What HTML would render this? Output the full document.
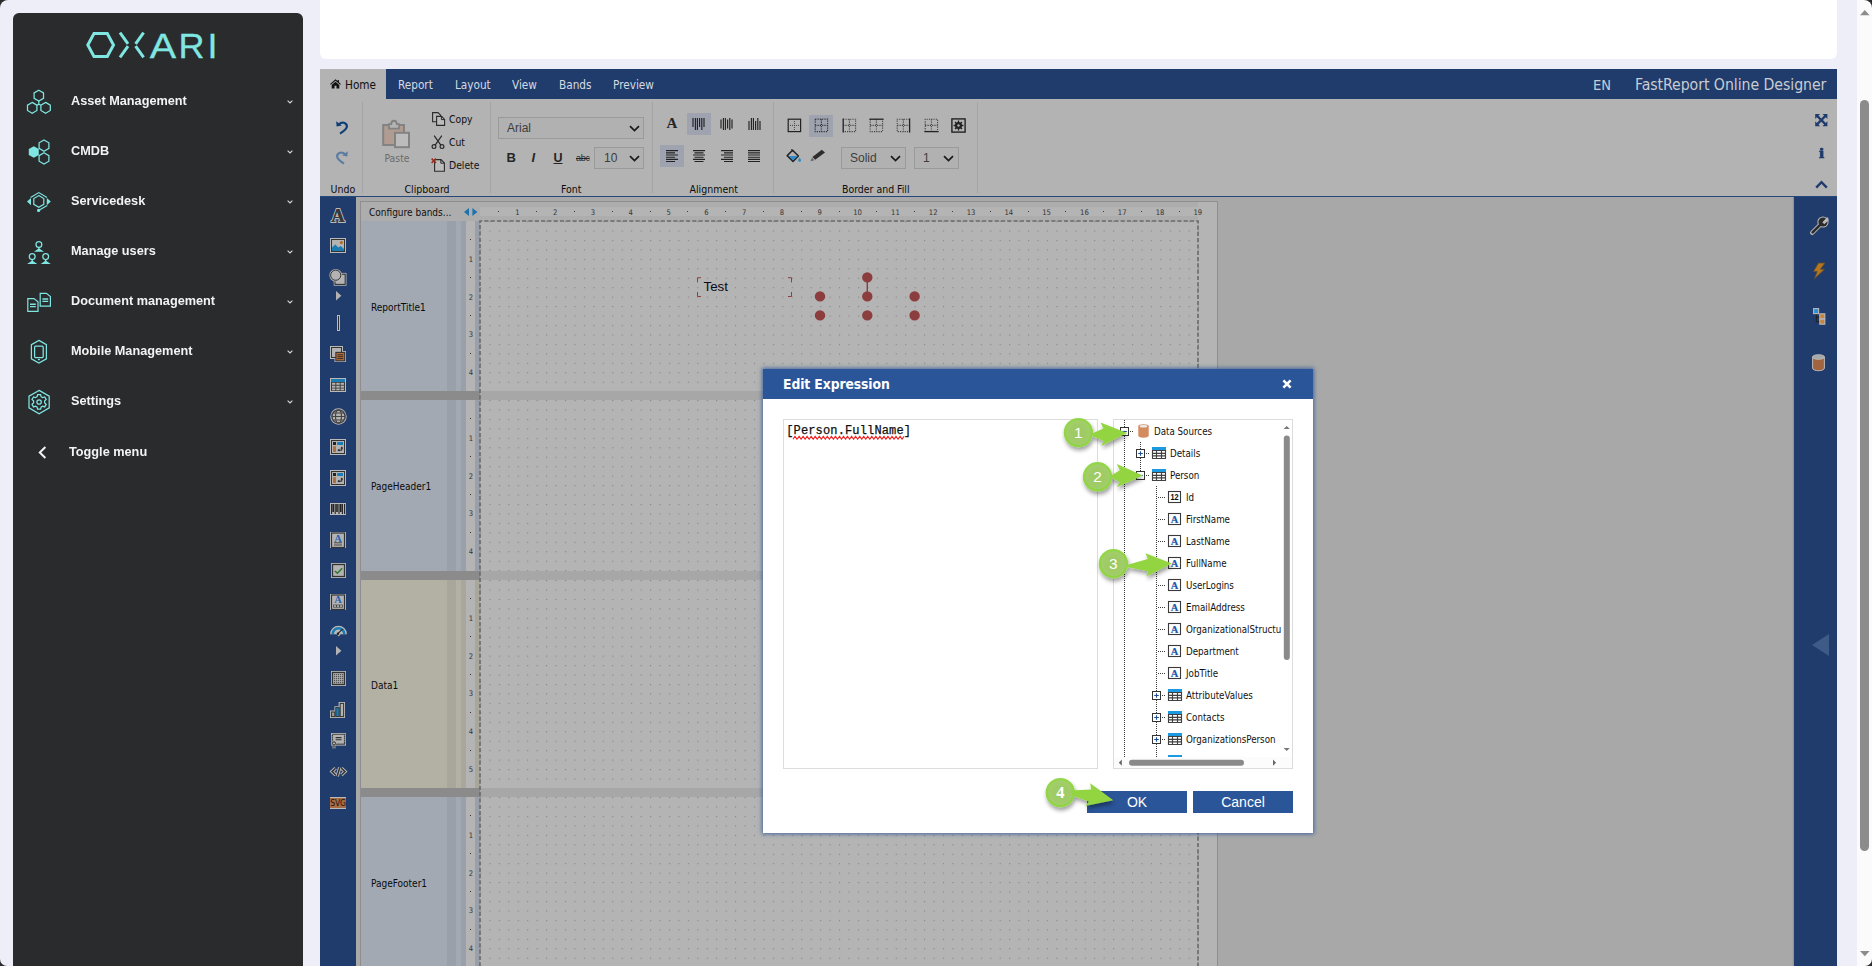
<!DOCTYPE html>
<html lang="en">
<head>
<meta charset="utf-8">
<title>Oxari - FastReport Online Designer</title>
<style>
*{box-sizing:border-box}
html,body{margin:0;padding:0}
body{width:1872px;height:966px;overflow:hidden;background:#eeeef8;position:relative;font-family:"Liberation Sans",sans-serif}
.abs{position:absolute}
.tah{font-family:"DejaVu Sans Condensed","DejaVu Sans","Liberation Sans",sans-serif}
.arial{font-family:"Liberation Sans",sans-serif}
svg{display:block;overflow:visible}
/* sidebar */
#side{left:13px;top:13px;width:290px;height:960px;background:#2a2b2d;border-radius:6px 6px 0 0}
.mi{position:absolute;left:58px;height:20px;line-height:20px;font:bold 13.6px "Liberation Sans",sans-serif;color:#f3f3f3;white-space:nowrap;transform-origin:0 50%;transform:scaleX(.935)}
.chev{position:absolute;left:273.5px;width:6px;height:4px}
.ico{position:absolute}
/* designer */
#tabbar{left:320px;top:69px;width:1517px;height:30px;background:#1f3c6c}
.tab{position:absolute;top:1px;height:30px;line-height:30px;font-size:11.7px;color:#d6dae2;white-space:nowrap}
#ribbon{left:320px;top:99px;width:1517px;height:97px;background:#b3b3b3}
.gl{position:absolute;top:83px;font-size:10.5px;color:#0c0c0c;white-space:nowrap;line-height:14px}
.sep{position:absolute;top:3px;width:1px;height:91px;background:#a4a4a4}
.rt{position:absolute;font-size:10.3px;color:#111;white-space:nowrap;line-height:14px}
.sel{position:absolute;border:1px solid #9a9a9a;background:#b1b1b1;color:#3d3d3d;font:12px "Liberation Sans",sans-serif;white-space:nowrap}
.hl{position:absolute;background:#9ea3af}
.bandl{position:absolute;left:371px;font-size:10px;color:#0a0a0a;line-height:12px;white-space:nowrap}
.rn{position:absolute;font-size:7.6px;color:#333;line-height:10px;text-align:center;width:14px;white-space:nowrap}
.tl{position:absolute;font-size:9.7px;color:#111;line-height:12px;white-space:nowrap}
.badge{position:absolute;width:28px;height:28px;border-radius:50%;background:radial-gradient(circle at 50% 40%,#9fd356 0%,#8cc63f 70%,#86bf3c 100%);border:1px solid #a6d66a;box-shadow:0 1px 4px rgba(70,110,20,.55);color:#fff;font:15px "DejaVu Sans Condensed","Liberation Sans",sans-serif;line-height:26px;text-align:center}
</style>
</head>
<body>
<!-- window corners -->
<div class="abs" style="left:0;top:0;width:8px;height:8px;background:#2b2b2c"><div style="width:100%;height:100%;background:#eeeef8;border-top-left-radius:9px"></div></div>
<div class="abs" style="left:0;top:959px;width:7px;height:7px;background:#2b2b2c"><div style="width:100%;height:100%;background:#eeeef8;border-bottom-left-radius:8px"></div></div>
<!-- ========== SIDEBAR ========== -->
<div id="side" class="abs">
 <svg class="abs" style="left:73px;top:19px" width="130" height="26" viewBox="86 32 130 26" role="img" aria-label="OXARI">
  <g fill="none" stroke="#7fe6e1" stroke-width="3" stroke-linejoin="miter">
   <polygon points="87.8,45 94,33.6 107.3,33.6 113.5,45 107.3,56.4 94,56.4"/>
   <polyline points="120,32.6 128,43.8"/><polyline points="120,57.4 128,46.2"/>
   <polyline points="143.6,32.6 135.6,43.8"/><polyline points="143.6,57.4 135.6,46.2"/>
  </g>
  <text fill="#7fe6e1" stroke="#7fe6e1" stroke-width=".3" font-family="Liberation Sans, sans-serif" font-size="35.4" y="58"><tspan x="149.8" textLength="26.4" lengthAdjust="spacingAndGlyphs">A</tspan><tspan x="178.6" textLength="26" lengthAdjust="spacingAndGlyphs">R</tspan><tspan x="207.4" textLength="10" lengthAdjust="spacingAndGlyphs">I</tspan></text>
 </svg>

 <!-- Asset Management icon -->
 <svg class="ico" style="left:13px;top:76px" width="26" height="26" viewBox="26 89 26 26">
  <g fill="none" stroke="#7fe6e1" stroke-width="1.25">
   <polygon points="38.8,90.2 43.5,92.9 43.5,98.3 38.8,101 34.1,98.3 34.1,92.9"/>
   <polygon points="32.2,102.4 36.9,105.1 36.9,110.5 32.2,113.2 27.5,110.5 27.5,105.1"/>
   <polygon points="45.6,102.4 50.3,105.1 50.3,110.5 45.6,113.2 40.9,110.5 40.9,105.1"/>
   <path d="M38.8,101v3.2M38.8,104.2l-1.9,1M38.8,104.2l2,1"/>
  </g>
 </svg>
 <div class="mi" style="top:80px">Asset Management</div>
 <svg class="chev" style="top:87px" viewBox="0 0 6 4"><path d="M.6,.6 3,3 5.4,.6" fill="none" stroke="#d8d8d8" stroke-width="1.1"/></svg>

 <!-- CMDB icon -->
 <svg class="ico" style="left:13px;top:126px" width="26" height="26" viewBox="26 139 26 26">
  <polygon fill="#7fe6e1" points="33.8,146.2 38.8,149.1 38.8,154.9 33.8,157.8 28.8,154.9 28.8,149.1"/>
  <g fill="none" stroke="#7fe6e1" stroke-width="1.25">
   <polygon points="44,140 48.9,142.8 48.9,148.4 44,151.2 39.1,148.4 39.1,142.8"/>
   <polygon points="44,152.8 48.9,155.6 48.9,161.2 44,164 39.1,161.2 39.1,155.6"/>
  </g>
 </svg>
 <div class="mi" style="top:130px">CMDB</div>
 <svg class="chev" style="top:137px" viewBox="0 0 6 4"><path d="M.6,.6 3,3 5.4,.6" fill="none" stroke="#d8d8d8" stroke-width="1.1"/></svg>

 <!-- Servicedesk icon -->
 <svg class="ico" style="left:13px;top:176px" width="26" height="26" viewBox="26 189 26 26">
  <g fill="none" stroke="#7fe6e1" stroke-width="1.2">
   <polygon points="38.8,195.6 43.8,198.5 43.8,204.3 38.8,207.2 33.8,204.3 33.8,198.5"/>
   <path d="M30.6,197.6 38.8,192.6 47,197.6"/>
   <path d="M47.2,205.6 39,210.2"/>
  </g>
  <path fill="#7fe6e1" d="M31,198 31,205.2 27,201.6zM46.8,198 46.8,205.2 50.8,201.6z"/>
  <circle cx="38.6" cy="210.4" r="1.6" fill="#7fe6e1"/>
 </svg>
 <div class="mi" style="top:180px">Servicedesk</div>
 <svg class="chev" style="top:187px" viewBox="0 0 6 4"><path d="M.6,.6 3,3 5.4,.6" fill="none" stroke="#d8d8d8" stroke-width="1.1"/></svg>

 <!-- Manage users icon -->
 <svg class="ico" style="left:13px;top:226px" width="26" height="26" viewBox="26 239 26 26">
  <g fill="none" stroke="#7fe6e1" stroke-width="1.25">
   <circle cx="38.9" cy="244.4" r="2.9"/><circle cx="32.2" cy="256.6" r="2.9"/><circle cx="45.7" cy="256.6" r="2.9"/>
  </g>
  <path fill="#7fe6e1" d="M38.2,247.2h1.4v1.6l4.4,2.9h-10l4.2,-2.9zM31.5,259.4h1.4v1.6l4.4,2.9h-10.2l4.4,-2.9zM45,259.4h1.4v1.6l4.4,2.9h-10.2l4.4,-2.9z"/>
 </svg>
 <div class="mi" style="top:230px">Manage users</div>
 <svg class="chev" style="top:237px" viewBox="0 0 6 4"><path d="M.6,.6 3,3 5.4,.6" fill="none" stroke="#d8d8d8" stroke-width="1.1"/></svg>

 <!-- Document management icon -->
 <svg class="ico" style="left:13px;top:276px" width="26" height="26" viewBox="26 289 26 26">
  <g fill="none" stroke="#7fe6e1" stroke-width="1.2">
   <path d="M27.8,298.6h6.2l4,3.2v9.6h-10.2z"/>
   <path d="M40.2,293.4h6.2l4,3.2v9.6h-10.2z"/>
   <path d="M30,304.2h5.8M30,306.6h5.8M42.4,299h5.8M42.4,301.4h5.8" stroke-width="1.4"/>
  </g>
 </svg>
 <div class="mi" style="top:280px">Document management</div>
 <svg class="chev" style="top:287px" viewBox="0 0 6 4"><path d="M.6,.6 3,3 5.4,.6" fill="none" stroke="#d8d8d8" stroke-width="1.1"/></svg>

 <!-- Mobile Management icon -->
 <svg class="ico" style="left:13px;top:326px" width="26" height="26" viewBox="26 339 26 26">
  <g fill="none" stroke="#7fe6e1" stroke-width="1.25">
   <polygon points="38.9,340.4 46.4,344.6 46.4,358.8 38.9,363 31.4,358.8 31.4,344.6"/>
   <rect x="34.6" y="346.2" width="8.6" height="11.4" rx="1"/>
   <path d="M37.9,359.6h2"/>
  </g>
 </svg>
 <div class="mi" style="top:330px">Mobile Management</div>
 <svg class="chev" style="top:337px" viewBox="0 0 6 4"><path d="M.6,.6 3,3 5.4,.6" fill="none" stroke="#d8d8d8" stroke-width="1.1"/></svg>

 <!-- Settings icon -->
 <svg class="ico" style="left:13px;top:376px" width="26" height="26" viewBox="26 389 26 26">
  <g fill="none" stroke="#7fe6e1" stroke-width="1.25">
   <polygon points="39.1,390.4 49.2,396.2 49.2,407.9 39.1,413.7 29,407.9 29,396.2"/>
   <circle cx="39.1" cy="402" r="2.2"/>
   <path d="M37.6,394.6h3l.5,2.1 1.5,.9 2.1,-.7 1.5,2.6 -1.6,1.5v1.8l1.6,1.5 -1.5,2.6 -2.1,-.7 -1.5,.9 -.5,2.1h-3l-.5,-2.1 -1.5,-.9 -2.1,.7 -1.5,-2.6 1.6,-1.5v-1.8l-1.6,-1.5 1.5,-2.6 2.1,.7 1.5,-.9z"/>
  </g>
 </svg>
 <div class="mi" style="top:380px">Settings</div>
 <svg class="chev" style="top:387px" viewBox="0 0 6 4"><path d="M.6,.6 3,3 5.4,.6" fill="none" stroke="#d8d8d8" stroke-width="1.1"/></svg>

 <!-- Toggle -->
 <svg class="ico" style="left:25px;top:433px" width="9" height="13" viewBox="0 0 9 13"><path d="M7.4,1 1.8,6.5 7.4,12" fill="none" stroke="#f3f3f3" stroke-width="2"/></svg>
 <div class="mi" style="left:56px;top:431px">Toggle menu</div>
</div>

<!-- top white panel -->
<div class="abs" style="left:320px;top:-10px;width:1517px;height:69px;background:#fff;border-radius:0 0 6px 6px"></div>
<!-- ========== DESIGNER: TAB BAR ========== -->
<div id="tabbar" class="abs tah">
 <div class="abs" style="left:0;top:0;width:66px;height:30px;background:#b3b3b3"></div>
 <svg class="abs" style="left:10px;top:10px" width="11" height="10" viewBox="0 0 11 10"><path fill="#111" d="M5.5,.3 .1,4.9 .8,5.7 5.5,1.8 10.2,5.7 10.9,4.9 8.9,3.2V.9H7.6v1.2zM5.5,2.7 1.7,5.9V9.6H4.5V6.8h2V9.6H9.3V5.9z"/></svg>
 <div class="tab" style="left:25px;color:#101010">Home</div>
 <div class="tab" style="left:78px">Report</div>
 <div class="tab" style="left:135px">Layout</div>
 <div class="tab" style="left:192px">View</div>
 <div class="tab" style="left:239px">Bands</div>
 <div class="tab" style="left:293px">Preview</div>
 <div class="tab" style="left:1273px;font-size:14.5px;color:#c9ccd3">EN</div>
 <div class="tab" style="left:1315px;font-size:15.7px;color:#c9ccd3;letter-spacing:-.05px">FastReport Online Designer</div>
</div>

<!-- ========== DESIGNER: RIBBON ========== -->
<div id="ribbon" class="abs tah">
 <!-- Undo group -->
 <svg class="abs" style="left:15px;top:21px" width="14" height="15" viewBox="0 0 14 15"><path d="M1.2,1.2 1.6,6.6 6.9,5.4z" fill="#103f78"/><path d="M4,4.2C7,1.2 11.6,2.6 11.9,6.2 12.1,9.2 8.6,11.4 5,13.6" fill="none" stroke="#103f78" stroke-width="2.2"/></svg>
 <svg class="abs" style="left:15px;top:51px" width="14" height="15" viewBox="0 0 14 15"><g transform="translate(14,0) scale(-1,1)"><path d="M1.2,1.2 1.6,6.6 6.9,5.4z" fill="#5c7ca2"/><path d="M4,4.2C7,1.2 11.6,2.6 11.9,6.2 12.1,9.2 8.6,11.4 5,13.6" fill="none" stroke="#5c7ca2" stroke-width="2.2"/></g></svg>
 <div class="gl" style="left:10.5px">Undo</div>
 <div class="sep" style="left:42px"></div>

 <!-- Clipboard group -->
 <svg class="abs" style="left:61px;top:20px" width="30" height="30" viewBox="381 119 30 30">
  <rect x="383.2" y="125" width="20.8" height="20" fill="#b09c90" stroke="#838383" stroke-width="2"/>
  <path d="M389,128.6v-4.4h2.2c0,-4.6 5.6,-4.6 5.6,0h2.2v4.4z" fill="#b3b3b3" stroke="#838383" stroke-width="1.8"/>
  <rect x="395" y="132.8" width="14" height="14.4" fill="#bcbcbc" stroke="#838383" stroke-width="2"/>
 </svg>
 <div class="rt" style="left:64.5px;top:52px;color:#6b6b6b">Paste</div>

 <svg class="abs" style="left:111px;top:12px" width="15" height="15" viewBox="431 111 15 15">
  <path d="M432.6,112.6h5.4l2.6,2.6v6.6h-8z" fill="#b6b6b6" stroke="#2a2a2a" stroke-width="1.1"/>
  <path d="M436.6,116.4h5l3,3v6h-8z" fill="#bcbcbc" stroke="#2a2a2a" stroke-width="1.1"/>
  <path d="M441.4,116.6v3h3" fill="none" stroke="#2a2a2a" stroke-width="1"/>
 </svg>
 <div class="rt" style="left:129px;top:12.5px">Copy</div>

 <svg class="abs" style="left:111px;top:35px" width="14" height="15" viewBox="431 134 14 15">
  <g fill="none" stroke="#2a2a2a" stroke-width="1.2"><path d="M434.2,135.6 441,145.4M441.8,135.6 435,145.4"/><circle cx="434" cy="146.6" r="1.9"/><circle cx="442" cy="146.6" r="1.9"/></g>
 </svg>
 <div class="rt" style="left:129px;top:35.5px">Cut</div>

 <svg class="abs" style="left:111px;top:58px" width="15" height="15" viewBox="431 157 15 15">
  <path d="M434.6,159.6h6.4l3.4,3.4v8.2h-9.8z" fill="#bcbcbc" stroke="#2a2a2a" stroke-width="1.1"/>
  <path d="M440.8,159.8v3.4h3.4" fill="none" stroke="#2a2a2a" stroke-width="1"/>
  <path d="M431.6,158.6l4.4,4.4M436,158.6l-4.4,4.4" stroke="#9a2b1c" stroke-width="1.5"/>
 </svg>
 <div class="rt" style="left:129px;top:58.5px">Delete</div>
 <div class="gl" style="left:84.5px">Clipboard</div>
 <div class="sep" style="left:170px"></div>

 <!-- Font group -->
 <div class="sel" style="left:178px;top:18px;width:146px;height:22px;line-height:20px;padding-left:8px">Arial</div>
 <svg class="abs" style="left:309px;top:26px" width="11" height="7" viewBox="0 0 11 7"><path d="M1,1.2 5.5,5.6 10,1.2" fill="none" stroke="#1a1a1a" stroke-width="1.7"/></svg>
 <div class="abs arial" style="left:186.5px;top:51px;font:bold 13px 'Liberation Sans',sans-serif;color:#262626;line-height:16px">B</div>
 <div class="abs arial" style="left:211.5px;top:51px;font:italic bold 13px 'Liberation Sans',sans-serif;color:#262626;line-height:16px">I</div>
 <div class="abs arial" style="left:233.5px;top:50.5px;font:bold 12.5px 'Liberation Sans',sans-serif;color:#262626;line-height:16px;text-decoration:underline">U</div>
 <div class="abs arial" style="left:256px;top:51.5px;font:9px 'Liberation Sans',sans-serif;color:#262626;line-height:14px;text-decoration:line-through;letter-spacing:-.3px">abc</div>
 <div class="sel" style="left:274px;top:48px;width:50px;height:22px;line-height:20px;padding-left:9px">10</div>
 <svg class="abs" style="left:309px;top:56px" width="11" height="7" viewBox="0 0 11 7"><path d="M1,1.2 5.5,5.6 10,1.2" fill="none" stroke="#1a1a1a" stroke-width="1.7"/></svg>
 <div class="gl" style="left:241px">Font</div>
 <div class="sep" style="left:332px"></div>

 <!-- Alignment group -->
 <div class="abs" style="left:346.5px;top:15.5px;font:bold 15px 'Liberation Serif',serif;color:#262626;line-height:16px">A</div>
 <div class="hl" style="left:367px;top:14px;width:24px;height:22px"></div>
 <svg class="abs" style="left:372px;top:19px" width="13" height="12" viewBox="0 0 13 12"><path d="M1,0v9M3.4,0v12M5.4,0v12M7.6,0v9M9.8,0v12M12,0v9" stroke="#222" stroke-width="1.15" fill="none"/></svg>
 <svg class="abs" style="left:400px;top:19px" width="13" height="12" viewBox="0 0 13 12"><path d="M1,1.5v9M3.4,0v12M5.4,0v12M7.6,1.5v9M9.8,0v12M12,1.5v9" stroke="#222" stroke-width="1.15" fill="none"/></svg>
 <svg class="abs" style="left:428px;top:19px" width="13" height="12" viewBox="0 0 13 12"><path d="M1,3v9M3.4,0v12M5.4,0v12M7.6,3v9M9.8,0v12M12,3v9" stroke="#222" stroke-width="1.15" fill="none"/></svg>
 <div class="hl" style="left:340px;top:46px;width:24px;height:22px"></div>
 <svg class="abs" style="left:346px;top:51px" width="13" height="12" viewBox="0 0 13 12"><path d="M0,.6h12M0,2.8h9M0,5h12M0,7.2h9M0,9.4h12M0,11.5h9" stroke="#222" stroke-width="1.15" fill="none"/></svg>
 <svg class="abs" style="left:372.5px;top:51px" width="13" height="12" viewBox="0 0 13 12"><path d="M0,.6h12M1.5,2.8h9M0,5h12M1.5,7.2h9M0,9.4h12M1.5,11.5h9" stroke="#222" stroke-width="1.15" fill="none"/></svg>
 <svg class="abs" style="left:401px;top:51px" width="13" height="12" viewBox="0 0 13 12"><path d="M0,.6h12M3,2.8h9M0,5h12M3,7.2h9M0,9.4h12M3,11.5h9" stroke="#222" stroke-width="1.15" fill="none"/></svg>
 <svg class="abs" style="left:428px;top:51px" width="13" height="12" viewBox="0 0 13 12"><path d="M0,.6h12M0,2.8h12M0,5h12M0,7.2h12M0,9.4h12M0,11.5h12" stroke="#222" stroke-width="1.15" fill="none"/></svg>
 <div class="gl" style="left:369.5px">Alignment</div>
 <div class="sep" style="left:453px"></div>

 <!-- Border and Fill group -->
 <svg class="abs" style="left:467px;top:19px" width="15" height="15" viewBox="0 0 15 15"><rect x="1.2" y="1.2" width="12.4" height="12.4" fill="none" stroke="#222" stroke-width="1.2"/><path d="M7.4,3v9M3,7.4h9" stroke="#444" stroke-width="1" stroke-dasharray="1 1" fill="none"/></svg>
 <div class="hl" style="left:489px;top:16px;width:24px;height:22px"></div>
 <svg class="abs" style="left:494px;top:19px" width="15" height="15" viewBox="0 0 15 15"><path d="M1.2,1.2h12.4v12.4h-12.4zM7.4,1.2v12.4M1.2,7.4h12.4" fill="none" stroke="#333" stroke-width="1.2" stroke-dasharray="1.2 1.1"/></svg>
 <svg class="abs" style="left:522px;top:19px" width="15" height="15" viewBox="0 0 15 15"><path d="M1.2,1.2h12.4v12.4h-12.4M7.4,1.2v12.4M1.2,7.4h12.4" fill="none" stroke="#444" stroke-width="1.1" stroke-dasharray="1.2 1.1"/><path d="M1.2,.4v14.2" stroke="#222" stroke-width="1.3"/></svg>
 <svg class="abs" style="left:549px;top:19px" width="15" height="15" viewBox="0 0 15 15"><path d="M1.2,1.2v12.4h12.4v-12.4M7.4,1.2v12.4M1.2,7.4h12.4" fill="none" stroke="#444" stroke-width="1.1" stroke-dasharray="1.2 1.1"/><path d="M.4,1.2h14.2" stroke="#222" stroke-width="1.3"/></svg>
 <svg class="abs" style="left:576px;top:19px" width="15" height="15" viewBox="0 0 15 15"><path d="M13.6,1.2h-12.4v12.4h12.4M7.4,1.2v12.4M1.2,7.4h12.4" fill="none" stroke="#444" stroke-width="1.1" stroke-dasharray="1.2 1.1"/><path d="M13.6,.4v14.2" stroke="#222" stroke-width="1.3"/></svg>
 <svg class="abs" style="left:604px;top:19px" width="15" height="15" viewBox="0 0 15 15"><path d="M1.2,13.6v-12.4h12.4v12.4M7.4,1.2v12.4M1.2,7.4h12.4" fill="none" stroke="#444" stroke-width="1.1" stroke-dasharray="1.2 1.1"/><path d="M.4,13.6h14.2" stroke="#222" stroke-width="1.3"/></svg>
 <svg class="abs" style="left:630.5px;top:18.5px" width="15" height="15" viewBox="0 0 15 15"><rect x=".9" y=".9" width="13.2" height="13.2" fill="none" stroke="#222" stroke-width="1.4"/><circle cx="7.5" cy="7.5" r="2.7" fill="none" stroke="#222" stroke-width="1.7"/><path d="M7.5,2.6v9.8M2.6,7.5h9.8M4,4l7,7M11,4l-7,7" stroke="#222" stroke-width="1.3"/><circle cx="7.5" cy="7.5" r="1.2" fill="#b3b3b3"/></svg>

 <svg class="abs" style="left:466px;top:50px" width="16" height="14" viewBox="0 0 16 14"><path d="M6.6,1.2 12.4,7 7,12.4 1.2,6.6z" fill="#b3b3b3" stroke="#222" stroke-width="1.5" stroke-linejoin="round"/><path d="M2.4,7h9.4L7,11.6z" fill="#2e8bc8"/><path d="M5.4,.4 7.4,2.4" stroke="#222" stroke-width="1.3"/><path d="M13.6,8.6c1,1.4 1.4,2.2 1.4,2.8a1.4,1.4 0 0 1 -2.8,0c0,-.6 .4,-1.4 1.4,-2.8z" fill="#2e8bc8"/></svg>
 <svg class="abs" style="left:490px;top:50px" width="16" height="13" viewBox="0 0 16 13"><path d="M11.8,.8 15,3.4 5.2,10.8 2.4,8z" fill="#2d2d2d"/><path d="M1.9,8.7 4.4,11.3 .6,12.3z" fill="#666"/></svg>
 <div class="sel" style="left:521px;top:48px;width:65px;height:22px;line-height:20px;padding-left:8px">Solid</div>
 <svg class="abs" style="left:570px;top:56px" width="11" height="7" viewBox="0 0 11 7"><path d="M1,1.2 5.5,5.6 10,1.2" fill="none" stroke="#1a1a1a" stroke-width="1.7"/></svg>
 <div class="sel" style="left:594px;top:48px;width:45px;height:22px;line-height:20px;padding-left:8px">1</div>
 <svg class="abs" style="left:623px;top:56px" width="11" height="7" viewBox="0 0 11 7"><path d="M1,1.2 5.5,5.6 10,1.2" fill="none" stroke="#1a1a1a" stroke-width="1.7"/></svg>
 <div class="gl" style="left:522px;font-size:10.45px">Border and Fill</div>
 <div class="sep" style="left:657px"></div>

 <!-- right-side icons -->
 <svg class="abs" style="left:1495.4px;top:14.8px" width="12.6" height="12.2" viewBox="0 0 13 13"><g fill="#1f3c6c"><path d="M0,0h5.2L3.5,1.7 6.5,4.7 9.5,1.7 7.8,0H13V5.2L11.3,3.5 8.3,6.5 11.3,9.5 13,7.8V13H7.8L9.5,11.3 6.5,8.3 3.5,11.3 5.2,13H0V7.8L1.7,9.5 4.7,6.5 1.7,3.5 0,5.2z"/></g></svg>
 <div class="abs" style="left:1499.2px;top:45px;font:bold 15px 'Liberation Serif',serif;color:#1f3c6c;line-height:18px;-webkit-text-stroke:.7px #1f3c6c;transform:scaleX(1.25);transform-origin:0 50%">i</div>
 <svg class="abs" style="left:1495px;top:81px" width="13" height="9" viewBox="0 0 13 9"><path d="M1.2,7.6 6.5,2.2 11.8,7.6" fill="none" stroke="#1f3c6c" stroke-width="2.4"/></svg>
</div>
<div class="abs" style="left:320px;top:196px;width:1517px;height:1px;background:#25477c"></div>
<!-- ========== DESIGNER: WORK AREA ========== -->
<div class="abs" style="left:320px;top:197px;width:1517px;height:780px;background:#a8a8a8"></div>
<div id="ltool" class="abs" style="left:320px;top:197px;width:36px;height:780px;background:#1f3c6c"></div>
<div class="abs" style="left:356px;top:197px;width:4px;height:780px;background:#a9a9a9"></div>
<div id="canvas" class="abs tah" style="left:360px;top:201px;width:858px;height:780px;background:#b4b4b4;border:1px solid #8e8e8e"></div>
<div class="abs" style="left:361px;top:202px;width:837px;height:19px;background:#adadad"></div>
<div class="abs" style="left:480px;top:207px;width:719px;height:9px;background:#b4b4b4"></div>
<div class="abs tah" style="left:369px;top:205.5px;font-size:10px;line-height:13px;color:#111;white-space:nowrap">Configure bands...</div>
<svg class="abs" style="left:464px;top:208px" width="14" height="8" viewBox="0 0 14 8"><path d="M5,0V8L0,4zM8.4,0V8L13.4,4z" fill="#1d72ae"/></svg>
<div class="tah">
<div class="rn" style="left:510.4px;top:208px">1</div><div class="rn" style="left:548.2px;top:208px">2</div><div class="rn" style="left:586.0px;top:208px">3</div><div class="rn" style="left:623.8px;top:208px">4</div><div class="rn" style="left:661.6px;top:208px">5</div><div class="rn" style="left:699.4px;top:208px">6</div><div class="rn" style="left:737.2px;top:208px">7</div><div class="rn" style="left:775.0px;top:208px">8</div><div class="rn" style="left:812.8px;top:208px">9</div><div class="rn" style="left:850.6px;top:208px">10</div><div class="rn" style="left:888.4px;top:208px">11</div><div class="rn" style="left:926.2px;top:208px">12</div><div class="rn" style="left:964.0px;top:208px">13</div><div class="rn" style="left:1001.8px;top:208px">14</div><div class="rn" style="left:1039.6px;top:208px">15</div><div class="rn" style="left:1077.4px;top:208px">16</div><div class="rn" style="left:1115.2px;top:208px">17</div><div class="rn" style="left:1153.0px;top:208px">18</div><div class="rn" style="left:1190.8px;top:208px">19</div><div class="abs" style="left:498.4px;top:211px;width:1px;height:1px;background:#4a3a3a"></div><div class="abs" style="left:536.2px;top:211px;width:1px;height:1px;background:#4a3a3a"></div><div class="abs" style="left:574.0px;top:211px;width:1px;height:1px;background:#4a3a3a"></div><div class="abs" style="left:611.8px;top:211px;width:1px;height:1px;background:#4a3a3a"></div><div class="abs" style="left:649.6px;top:211px;width:1px;height:1px;background:#4a3a3a"></div><div class="abs" style="left:687.4px;top:211px;width:1px;height:1px;background:#4a3a3a"></div><div class="abs" style="left:725.2px;top:211px;width:1px;height:1px;background:#4a3a3a"></div><div class="abs" style="left:763.0px;top:211px;width:1px;height:1px;background:#4a3a3a"></div><div class="abs" style="left:800.8px;top:211px;width:1px;height:1px;background:#4a3a3a"></div><div class="abs" style="left:838.6px;top:211px;width:1px;height:1px;background:#4a3a3a"></div><div class="abs" style="left:876.4px;top:211px;width:1px;height:1px;background:#4a3a3a"></div><div class="abs" style="left:914.2px;top:211px;width:1px;height:1px;background:#4a3a3a"></div><div class="abs" style="left:952.0px;top:211px;width:1px;height:1px;background:#4a3a3a"></div><div class="abs" style="left:989.8px;top:211px;width:1px;height:1px;background:#4a3a3a"></div><div class="abs" style="left:1027.6px;top:211px;width:1px;height:1px;background:#4a3a3a"></div><div class="abs" style="left:1065.4px;top:211px;width:1px;height:1px;background:#4a3a3a"></div><div class="abs" style="left:1103.2px;top:211px;width:1px;height:1px;background:#4a3a3a"></div><div class="abs" style="left:1141.0px;top:211px;width:1px;height:1px;background:#4a3a3a"></div><div class="abs" style="left:1178.8px;top:211px;width:1px;height:1px;background:#4a3a3a"></div>
</div>
<div class="abs" style="left:480px;top:221px;width:719px;height:760px;background:#b4b4b4"></div>
<div class="abs" style="left:1199px;top:221px;width:18px;height:780px;background:#b4b4b4"></div>
<svg class="abs" style="left:480px;top:221px" width="719" height="760"><defs><pattern id="dots" x="-0.1" y="0" width="9.45" height="9.45" patternUnits="userSpaceOnUse"><rect x="0" y="0" width="1.15" height="1.15" fill="#858585"/></pattern></defs><svg x="0" y="0" width="719" height="170"><rect x="0" y="0" width="719" height="170" fill="url(#dots)"/></svg><svg x="0" y="179" width="719" height="171"><rect x="0" y="0" width="719" height="171" fill="url(#dots)"/></svg><svg x="0" y="359" width="719" height="208"><rect x="0" y="0" width="719" height="208" fill="url(#dots)"/></svg><svg x="0" y="576" width="719" height="183"><rect x="0" y="0" width="719" height="183" fill="url(#dots)"/></svg></svg>
<div class="abs" style="left:361px;top:221px;width:119px;height:170px;background:#a3a9b3"></div><div class="abs" style="left:447px;top:221px;width:9px;height:170px;background:#9aa0a9"></div><div class="abs" style="left:461px;top:221px;width:5px;height:170px;background:#9aa0a9"></div><div class="abs" style="left:466px;top:221px;width:9px;height:170px;background:#b4b4b4"></div><div class="abs" style="left:475px;top:221px;width:5px;height:170px;background:#9aa0a9"></div><div class="bandl tah" style="top:301.5px">ReportTitle1</div>
<div class="tah"><div class="rn" style="left:464px;top:254.8px">1</div><div class="rn" style="left:464px;top:292.6px">2</div><div class="rn" style="left:464px;top:330.4px">3</div><div class="rn" style="left:464px;top:368.2px">4</div><div class="abs" style="left:470px;top:239.4px;width:1px;height:1px;background:#4a2a2a"></div><div class="abs" style="left:470px;top:277.2px;width:1px;height:1px;background:#4a2a2a"></div><div class="abs" style="left:470px;top:315.0px;width:1px;height:1px;background:#4a2a2a"></div><div class="abs" style="left:470px;top:352.8px;width:1px;height:1px;background:#4a2a2a"></div></div>
<div class="abs" style="left:361px;top:400px;width:119px;height:171px;background:#a3a9b3"></div><div class="abs" style="left:447px;top:400px;width:9px;height:171px;background:#9aa0a9"></div><div class="abs" style="left:461px;top:400px;width:5px;height:171px;background:#9aa0a9"></div><div class="abs" style="left:466px;top:400px;width:9px;height:171px;background:#b4b4b4"></div><div class="abs" style="left:475px;top:400px;width:5px;height:171px;background:#9aa0a9"></div><div class="bandl tah" style="top:480.5px">PageHeader1</div>
<div class="tah"><div class="rn" style="left:464px;top:433.8px">1</div><div class="rn" style="left:464px;top:471.6px">2</div><div class="rn" style="left:464px;top:509.4px">3</div><div class="rn" style="left:464px;top:547.2px">4</div><div class="abs" style="left:470px;top:418.4px;width:1px;height:1px;background:#4a2a2a"></div><div class="abs" style="left:470px;top:456.2px;width:1px;height:1px;background:#4a2a2a"></div><div class="abs" style="left:470px;top:494.0px;width:1px;height:1px;background:#4a2a2a"></div><div class="abs" style="left:470px;top:531.8px;width:1px;height:1px;background:#4a2a2a"></div></div>
<div class="abs" style="left:361px;top:580px;width:119px;height:208px;background:#b3b1a4"></div><div class="abs" style="left:447px;top:580px;width:9px;height:208px;background:#a9a79b"></div><div class="abs" style="left:461px;top:580px;width:5px;height:208px;background:#a9a79b"></div><div class="abs" style="left:466px;top:580px;width:9px;height:208px;background:#b4b4b4"></div><div class="abs" style="left:475px;top:580px;width:5px;height:208px;background:#a9a79b"></div><div class="bandl tah" style="top:679.5px">Data1</div>
<div class="tah"><div class="rn" style="left:464px;top:613.8px">1</div><div class="rn" style="left:464px;top:651.6px">2</div><div class="rn" style="left:464px;top:689.4px">3</div><div class="rn" style="left:464px;top:727.2px">4</div><div class="rn" style="left:464px;top:765.0px">5</div><div class="abs" style="left:470px;top:598.4px;width:1px;height:1px;background:#4a2a2a"></div><div class="abs" style="left:470px;top:636.2px;width:1px;height:1px;background:#4a2a2a"></div><div class="abs" style="left:470px;top:674.0px;width:1px;height:1px;background:#4a2a2a"></div><div class="abs" style="left:470px;top:711.8px;width:1px;height:1px;background:#4a2a2a"></div><div class="abs" style="left:470px;top:749.6px;width:1px;height:1px;background:#4a2a2a"></div></div>
<div class="abs" style="left:361px;top:797px;width:119px;height:183px;background:#a3a9b3"></div><div class="abs" style="left:447px;top:797px;width:9px;height:183px;background:#9aa0a9"></div><div class="abs" style="left:461px;top:797px;width:5px;height:183px;background:#9aa0a9"></div><div class="abs" style="left:466px;top:797px;width:9px;height:183px;background:#b4b4b4"></div><div class="abs" style="left:475px;top:797px;width:5px;height:183px;background:#9aa0a9"></div><div class="bandl tah" style="top:878.0px">PageFooter1</div>
<div class="tah"><div class="rn" style="left:464px;top:830.8px">1</div><div class="rn" style="left:464px;top:868.6px">2</div><div class="rn" style="left:464px;top:906.4px">3</div><div class="rn" style="left:464px;top:944.2px">4</div><div class="abs" style="left:470px;top:815.4px;width:1px;height:1px;background:#4a2a2a"></div><div class="abs" style="left:470px;top:853.2px;width:1px;height:1px;background:#4a2a2a"></div><div class="abs" style="left:470px;top:891.0px;width:1px;height:1px;background:#4a2a2a"></div><div class="abs" style="left:470px;top:928.8px;width:1px;height:1px;background:#4a2a2a"></div><div class="abs" style="left:470px;top:966.6px;width:1px;height:1px;background:#4a2a2a"></div></div>
<div class="abs" style="left:361px;top:391px;width:119px;height:9px;background:#8b8b8b"></div><div class="abs" style="left:480px;top:391px;width:737px;height:9px;background:#a7a7a7"></div>
<div class="abs" style="left:361px;top:571px;width:119px;height:9px;background:#8b8b8b"></div><div class="abs" style="left:480px;top:571px;width:737px;height:9px;background:#a7a7a7"></div>
<div class="abs" style="left:361px;top:788px;width:119px;height:9px;background:#8b8b8b"></div><div class="abs" style="left:480px;top:788px;width:737px;height:9px;background:#a7a7a7"></div>
<svg class="abs" style="left:478px;top:219px" width="724" height="760"><path d="M2,760V2H720V760" fill="none" stroke="#6a6a6a" stroke-width="1.6" stroke-dasharray="4.2 2.1"/></svg>
<svg class="abs" style="left:696px;top:277px" width="98" height="22" viewBox="696 277 98 22"><path d="M701,277.7H697.5V282.4M697.5,292V296.5H701M788,277.7H791.5V282.4M791.5,292V296.5H788" fill="none" stroke="#8f3f3f" stroke-width="1"/></svg>
<div class="abs arial" style="left:703.5px;top:279px;font-size:13.3px;line-height:16px;color:#0a0a1a">Test</div>
<svg class="abs" style="left:810px;top:268px" width="112" height="56" viewBox="810 268 112 56"><g fill="#8c3d3d"><circle cx="867.3" cy="277.4" r="5.2"/><circle cx="820" cy="296.4" r="5.2"/><circle cx="867.3" cy="296.4" r="5.2"/><circle cx="914.6" cy="296.4" r="5.2"/><circle cx="820" cy="315.4" r="5.2"/><circle cx="867.3" cy="315.4" r="5.2"/><circle cx="914.6" cy="315.4" r="5.2"/></g><path d="M867.3,277.4V296.4" stroke="#8c3d3d" stroke-width="1.4"/></svg>
<div class="abs" style="left:1794px;top:197px;width:43px;height:780px;background:#1f3c6c;box-shadow:-1px 0 1px rgba(0,0,0,.12)"></div>
<svg class="abs" style="left:1812px;top:634px" width="17" height="22" viewBox="0 0 17 22"><path d="M17,0V22L0,11z" fill="#3e5a86"/></svg>
<div class="abs" style="left:1857px;top:0;width:15px;height:966px;background:#fbfbfb"></div>
<div class="abs" style="left:1860px;top:100px;width:9px;height:751px;background:#8c8c8c;border-radius:5px"></div>
<svg class="abs" style="left:1859.8px;top:9.6px" width="9.6" height="5.2" viewBox="0 0 11 6"><path d="M0,6H11L5.5,0z" fill="#8c8c8c"/></svg>
<svg class="abs" style="left:1859.6px;top:950.8px" width="9.6" height="5.4" viewBox="0 0 11 6"><path d="M0,0H11L5.5,6z" fill="#8c8c8c"/></svg>
<div class="abs" style="left:1864px;top:0;width:8px;height:8px;background:#2b2b2c"><div style="width:100%;height:100%;background:#fbfbfb;border-top-right-radius:9px"></div></div>
<div class="abs" style="left:1865px;top:959px;width:7px;height:7px;background:#2b2b2c"><div style="width:100%;height:100%;background:#fbfbfb;border-bottom-right-radius:8px"></div></div>
<!-- left toolbar icons -->
<div class="abs" style="left:329.5px;top:204px;width:17px;text-align:center;font:bold 18.6px 'Liberation Serif',serif;line-height:23px;color:#3a3a3a;-webkit-text-stroke:2.2px #b9b9b9;paint-order:stroke fill">A</div>
<div class="abs" style="left:329.5px;top:204px;width:17px;text-align:center;font:bold 18.6px 'Liberation Serif',serif;line-height:23px;color:#383838">A</div>
<svg class="abs" style="left:330px;top:238px" width="16" height="15" viewBox="0 0 16 15"><rect width="16" height="15" fill="#b9b9b9"/><rect x="1.5" y="1.5" width="13" height="12" fill="#b3b3b3" stroke="#333" stroke-width="1"/><path d="M2,13V9.4L5.2,6.4 8.4,9.6 10.6,8 14,11V13z" fill="#1b7bb3"/><circle cx="11.4" cy="4.4" r="1.5" fill="#b0681c"/></svg>
<svg class="abs" style="left:329px;top:268px" width="18" height="18" viewBox="0 0 18 18"><rect x="6" y="6.2" width="10.2" height="10.2" fill="#b3b3b3" stroke="#b9b9b9" stroke-width="2.6"/><rect x="6" y="6.2" width="10.2" height="10.2" fill="#b3b3b3" stroke="#333" stroke-width="1.1"/><circle cx="6.7" cy="7.2" r="5.1" fill="#b3b3b3" stroke="#b9b9b9" stroke-width="2.4"/><circle cx="6.7" cy="7.2" r="5.1" fill="#b3b3b3" stroke="#333" stroke-width="1"/></svg>
<svg class="abs" style="left:336px;top:290.5px" width="6" height="10" viewBox="0 0 6 10"><path d="M0,0V9.6L5.4,4.8z" fill="#b3b3b3"/></svg>
<svg class="abs" style="left:337px;top:315px" width="3" height="16" viewBox="0 0 3 16"><rect x="0" y="0" width="3" height="16" fill="#b9b9b9"/><rect x="1" y="1" width="1" height="14" fill="#2e2e2e"/></svg>
<svg class="abs" style="left:330px;top:346px" width="16" height="16" viewBox="0 0 16 16"><path d="M0,0H13V5H16V16H4.5V13H0z" fill="#b9b9b9"/><rect x="1.5" y="1.5" width="10" height="10" fill="#b3b3b3" stroke="#333" stroke-width="1"/><rect x="5.9" y="6.4" width="8.8" height="8.4" fill="#b06f3c" stroke="#333" stroke-width="1.1"/><path d="M7.4,8.8H13.2M7.4,10.7H13.2M7.4,12.6H13.2" stroke="#2e211a" stroke-width=".9"/></svg>
<svg class="abs" style="left:330px;top:378px" width="16" height="14" viewBox="0 0 16 14"><rect width="16" height="14" fill="#b9b9b9"/><rect x="1" y="1" width="14" height="3" fill="#1b7bb3"/><rect x="1" y="4" width="14" height="9" fill="#3a3a3a"/><g fill="#b3b3b3"><rect x="2" y="4.8" width="3.4" height="2"/><rect x="6.3" y="4.8" width="3.4" height="2"/><rect x="10.6" y="4.8" width="3.4" height="2"/><rect x="2" y="7.7" width="3.4" height="2"/><rect x="6.3" y="7.7" width="3.4" height="2"/><rect x="10.6" y="7.7" width="3.4" height="2"/><rect x="2" y="10.5" width="3.4" height="1.8"/><rect x="6.3" y="10.5" width="3.4" height="1.8"/><rect x="10.6" y="10.5" width="3.4" height="1.8"/></g></svg>
<svg class="abs" style="left:329.5px;top:407.5px" width="17" height="17" viewBox="0 0 17 17"><circle cx="8.5" cy="8.5" r="8.2" fill="#b9b9b9"/><circle cx="8.5" cy="8.5" r="6.6" fill="#b3b3b3" stroke="#444" stroke-width="1.5"/><ellipse cx="8.5" cy="8.5" rx="3" ry="6.6" fill="none" stroke="#444" stroke-width="1.2"/><path d="M2,8.5H15M3,5H14M3,12H14" stroke="#444" stroke-width="1.2"/></svg>
<svg class="abs" style="left:330px;top:439px" width="16" height="16" viewBox="0 0 16 16"><rect width="16" height="16" fill="#b9b9b9"/><rect x="1.5" y="1.5" width="13" height="13" fill="#b3b3b3" stroke="#333" stroke-width="1"/><rect x="3" y="3" width="3" height="3" fill="#222"/><rect x="7.2" y="3" width="5.8" height="3" fill="#1b7bb3"/><rect x="3" y="7.2" width="3" height="5.8" fill="#b06f3c"/><path d="M8,11.2H11.8V8.4" fill="none" stroke="#222" stroke-width="1"/><path d="M7.4,11.2 9.4,9.8V12.6zM11.8,7.6 10.4,9.4H13.2z" fill="#222"/></svg>
<svg class="abs" style="left:330px;top:470px" width="16" height="16" viewBox="0 0 16 16"><rect width="16" height="16" fill="#b9b9b9"/><rect x="1.5" y="1.5" width="13" height="13" fill="#b3b3b3" stroke="#333" stroke-width="1"/><rect x="3" y="3" width="3" height="3" fill="#222"/><rect x="7.2" y="3" width="5.8" height="3" fill="#1b7bb3"/><rect x="3" y="7.2" width="3" height="5.8" fill="#b06f3c"/><path d="M8,11.2H11.8V8.4" fill="none" stroke="#222" stroke-width="1"/><path d="M7.4,11.2 9.4,9.8V12.6zM11.8,7.6 10.4,9.4H13.2z" fill="#222"/></svg>
<svg class="abs" style="left:330px;top:503px" width="16" height="12" viewBox="0 0 16 12"><rect width="16" height="12" fill="#b9b9b9"/><path d="M1.6,1V11M5.2,1V11M9,1V11M12.4,1V11M14.6,1V11" stroke="#222" stroke-width="1.1"/><path d="M3.2,1V9M7,1V9M10.8,1V9" stroke="#222" stroke-width="1.6"/></svg>
<svg class="abs" style="left:330px;top:532px" width="16" height="16" viewBox="0 0 16 16"><rect width="16" height="16" fill="#b9b9b9"/><rect x="1.5" y="1" width="13" height="14.5" fill="#b3b3b3" stroke="#333" stroke-width="1.2"/><text x="8" y="9.6" text-anchor="middle" font-family="Liberation Serif, serif" font-weight="bold" font-size="10.5" fill="#2a5fb0">A</text><path d="M4,10.8H12M4,13H12" stroke="#3a3a3a" stroke-width=".9"/></svg>
<svg class="abs" style="left:331px;top:563px" width="15" height="15" viewBox="0 0 15 15"><rect width="15" height="15" fill="#b9b9b9"/><rect x="1.5" y="1.5" width="12" height="12" fill="#b3b3b3" stroke="#333" stroke-width="1.3"/><path d="M3.8,8 6.4,10.2 11.2,5.2" fill="none" stroke="#2e7a2e" stroke-width="1.6"/></svg>
<svg class="abs" style="left:330px;top:594px" width="16" height="16" viewBox="0 0 16 16"><rect width="16" height="16" fill="#b9b9b9"/><rect x="1.5" y="1" width="13" height="14.5" fill="#b3b3b3" stroke="#333" stroke-width="1.2"/><text x="8" y="9.4" text-anchor="middle" font-family="Liberation Serif, serif" font-weight="bold" font-size="10.5" fill="#2a5fb0">A</text><rect x="3.2" y="10.6" width="9.6" height="3" fill="#444"/><g fill="#b3b3b3"><rect x="4" y="11.3" width="2" height="1.6"/><rect x="7" y="11.3" width="2" height="1.6"/><rect x="10" y="11.3" width="2" height="1.6"/></g></svg>
<svg class="abs" style="left:329.5px;top:624.5px" width="17" height="12" viewBox="0 0 17 12"><path d="M0,9.2A8.5,8.5 0 0 1 17,9.2H10.6L8.8,11.4 6.6,9.2z" fill="#b9b9b9"/><path d="M1.4,9A7.1,7.1 0 0 1 15.6,9H13A4.5,4.5 0 0 0 4,9z" fill="#1b7bb3"/><path d="M7.8,8.6 12.6,4.2" stroke="#222" stroke-width="1.1"/><circle cx="8" cy="8.7" r="1.2" fill="#222"/></svg>
<svg class="abs" style="left:336px;top:646px" width="6" height="10" viewBox="0 0 6 10"><path d="M0,0V9.6L5.4,4.8z" fill="#b3b3b3"/></svg>
<svg class="abs" style="left:331px;top:671px" width="15" height="15" viewBox="0 0 15 15"><rect width="15" height="15" fill="#b9b9b9"/><rect x="1.5" y="1.5" width="12" height="12" fill="#b3b3b3" stroke="#333" stroke-width="1.3"/><g fill="#1e1e1e"><rect x="3.2" y="3.2" width="1" height="1"/><rect x="3.2" y="5.2" width="1" height="1"/><rect x="3.2" y="7.2" width="1" height="1"/><rect x="3.2" y="9.2" width="1" height="1"/><rect x="3.2" y="11.2" width="1" height="1"/><rect x="5.2" y="3.2" width="1" height="1"/><rect x="5.2" y="5.2" width="1" height="1"/><rect x="5.2" y="7.2" width="1" height="1"/><rect x="5.2" y="9.2" width="1" height="1"/><rect x="5.2" y="11.2" width="1" height="1"/><rect x="7.2" y="3.2" width="1" height="1"/><rect x="7.2" y="5.2" width="1" height="1"/><rect x="7.2" y="7.2" width="1" height="1"/><rect x="7.2" y="9.2" width="1" height="1"/><rect x="7.2" y="11.2" width="1" height="1"/><rect x="9.2" y="3.2" width="1" height="1"/><rect x="9.2" y="5.2" width="1" height="1"/><rect x="9.2" y="7.2" width="1" height="1"/><rect x="9.2" y="9.2" width="1" height="1"/><rect x="9.2" y="11.2" width="1" height="1"/><rect x="11.2" y="3.2" width="1" height="1"/><rect x="11.2" y="5.2" width="1" height="1"/><rect x="11.2" y="7.2" width="1" height="1"/><rect x="11.2" y="9.2" width="1" height="1"/><rect x="11.2" y="11.2" width="1" height="1"/></g></svg>
<svg class="abs" style="left:330px;top:702px" width="15" height="16" viewBox="0 0 15 16"><path d="M0,8.6H4.4V4.2H8.6V0H15V16H0z" fill="#b9b9b9"/><rect x="1.4" y="10" width="3.4" height="4.6" fill="#9a9a9a" stroke="#333" stroke-width="1"/><rect x="5.8" y="5.6" width="3.4" height="9" fill="#1b7bb3" stroke="#333" stroke-width="1"/><rect x="10.2" y="1.4" width="3.4" height="13.2" fill="#b3b3b3" stroke="#333" stroke-width="1"/></svg>
<svg class="abs" style="left:331px;top:733px" width="15" height="16" viewBox="0 0 15 16"><rect width="15" height="12.6" fill="#b9b9b9"/><rect x="1.4" y="1.4" width="12.2" height="9.8" fill="#b3b3b3" stroke="#222" stroke-width="1.4" stroke-dasharray="1.2 .8"/><path d="M4.6,4.6H10.6M4.6,6.8H10.6" stroke="#333" stroke-width="1.1"/><circle cx="3" cy="10.4" r="2.4" fill="#b9b9b9"/><circle cx="3" cy="10.4" r="1.6" fill="#b3b3b3" stroke="#222" stroke-width=".9"/><path d="M1.8,12.4V15.4L3,14.4 4.2,15.4V12.4" fill="#555" stroke="#b9b9b9" stroke-width=".5"/></svg>
<svg class="abs" style="left:329.5px;top:766px" width="17" height="12" viewBox="0 0 17 12"><g fill="none" stroke="#b9b9b9" stroke-width="3.4" stroke-linejoin="miter"><path d="M5.6,2.2 2,5.6 5.6,9"/><path d="M11.4,2.2 15,5.6 11.4,9"/><path d="M9.8,1.4 7.2,10.2"/></g><g fill="none" stroke="#333" stroke-width="1.5"><path d="M5.6,2.2 2,5.6 5.6,9"/><path d="M11.4,2.2 15,5.6 11.4,9"/><path d="M9.8,1.4 7.2,10.2"/></g></svg>
<div class="abs" style="left:330px;top:797px;width:16px;height:12px;background:#a96b43;border-top:1px solid #b9b9b9;border-bottom:1px solid #b9b9b9;box-sizing:border-box;font:8.5px 'DejaVu Sans Condensed','Liberation Sans',sans-serif;line-height:10px;color:#1a1210;text-align:center;letter-spacing:-.2px">SVG</div>
<!-- right panel icons -->
<svg class="abs" style="left:1810.5px;top:216px" width="18" height="18" viewBox="0 0 18 18"><path d="M1.2,16.8 9.2,8.8" stroke="#b9b9b9" stroke-width="4.4" stroke-linecap="round"/><circle cx="12" cy="6" r="5.6" fill="#b9b9b9"/><path d="M1.6,16.4 9.4,8.6" stroke="#2b2b2b" stroke-width="2.6" stroke-linecap="round"/><circle cx="12" cy="6" r="4.6" fill="#2b2b2b"/><path d="M12,6 17,1 17.6,4.4 14.6,7z" fill="#b9b9b9"/><path d="M11.4,6.6 15.8,1.6 17.4,3.2 13.4,8.2z" fill="#b9b9b9"/></svg>
<svg class="abs" style="left:1811px;top:262px" width="16" height="18" viewBox="0 0 16 18"><path d="M7.4,1H14L9.4,7.2H13.6L3.2,17 6.2,9.6H2.4z" fill="#b5761c" stroke="#5a4a3a" stroke-width=".8"/></svg>
<svg class="abs" style="left:1813px;top:308px" width="14" height="17" viewBox="0 0 14 17"><path d="M3.4,6V13.6H7M3.4,9.4H7" fill="none" stroke="#222" stroke-width="1.1"/><rect x=".6" y=".6" width="5" height="5" fill="#2a8fd0" stroke="#b9b9b9" stroke-width="1.1"/><rect x="6.8" y="5.8" width="5" height="5" fill="#c9823c" stroke="#b9b9b9" stroke-width="1.1"/><rect x="6.8" y="11.2" width="5" height="5" fill="#c9823c" stroke="#b9b9b9" stroke-width="1.1"/></svg>
<svg class="abs" style="left:1812px;top:354px" width="13" height="17" viewBox="0 0 13 17"><path d="M.6,3V14C.6,17.6 12.4,17.6 12.4,14V3z" fill="#a0653f" stroke="#b9b9b9" stroke-width="1"/><ellipse cx="6.5" cy="3" rx="5.9" ry="2.3" fill="#a8a8a8" stroke="#b9b9b9" stroke-width="1"/></svg>
<!-- ========== EDIT EXPRESSION DIALOG ========== -->
<div id="dlg" class="abs" style="left:763px;top:369px;width:550px;height:464px;background:#fff;box-shadow:0 0 4px 1px rgba(43,85,153,.8)">
 <div class="abs tah" style="left:0;top:0;width:550px;height:30px;background:#2b5599;color:#fff;font-weight:bold;font-size:13.8px;line-height:30px;padding-left:20px;letter-spacing:-.1px">Edit Expression</div>
 <svg class="abs" style="left:518.8px;top:9.7px" width="10" height="10" viewBox="0 0 10 10"><path d="M1.4,1.4 8.6,8.6M8.6,1.4 1.4,8.6" stroke="#fff" stroke-width="2.6"/></svg>
 <div class="abs" style="left:20px;top:50px;width:315px;height:350px;border:1px solid #dcdcdc;background:#fff"></div>
 <div class="abs" style="left:23.2px;top:53.6px;font:12px 'Liberation Mono',monospace;letter-spacing:.15px;line-height:16px;color:#111;-webkit-text-stroke:.25px #111;white-space:pre">[Person.FullName]</div>
 <svg class="abs" style="left:0;top:0" width="340" height="80"><polyline points="30.0,70.3 32.0,67.2 34.0,70.3 36.1,67.2 38.1,70.3 40.1,67.2 42.1,70.3 44.1,67.2 46.2,70.3 48.2,67.2 50.2,70.3 52.2,67.2 54.2,70.3 56.3,67.2 58.3,70.3 60.3,67.2 62.3,70.3 64.3,67.2 66.4,70.3 68.4,67.2 70.4,70.3 72.4,67.2 74.4,70.3 76.5,67.2 78.5,70.3 80.5,67.2 82.5,70.3 84.5,67.2 86.6,70.3 88.6,67.2 90.6,70.3 92.6,67.2 94.6,70.3 96.7,67.2 98.7,70.3 100.7,67.2 102.7,70.3 104.7,67.2 106.8,70.3 108.8,67.2 110.8,70.3 112.8,67.2 114.8,70.3 116.9,67.2 118.9,70.3 120.9,67.2 122.9,70.3 124.9,67.2 127.0,70.3 129.0,67.2 131.0,70.3 133.0,67.2 135.0,70.3 137.1,67.2 139.1,70.3 141.1,67.2" fill="none" stroke="#f52222" stroke-width="1.15" stroke-linejoin="round"/></svg>
 <div class="abs" style="left:350px;top:50px;width:180px;height:350px;border:1px solid #dcdcdc;background:#fff"></div>
 <div id="tree" class="abs tah" style="left:351px;top:51px;width:167px;height:337.6px;overflow:hidden">
<svg class="abs" style="left:10.0px;top:0px" width="1" height="340"><path d="M.5,0V340" stroke="#3a3a3a" stroke-width="1" stroke-dasharray="1 1" shape-rendering="crispEdges"/></svg><svg class="abs" style="left:26.0px;top:22px" width="1" height="30"><path d="M.5,0V30" stroke="#3a3a3a" stroke-width="1" stroke-dasharray="1 1" shape-rendering="crispEdges"/></svg><svg class="abs" style="left:42.0px;top:66px" width="1" height="274"><path d="M.5,0V274" stroke="#3a3a3a" stroke-width="1" stroke-dasharray="1 1" shape-rendering="crispEdges"/></svg>
<svg class="abs" style="left:6px;top:7.0px" width="9" height="9" viewBox="0 0 9 9"><rect x=".5" y=".5" width="8" height="8" fill="#fff" stroke="#333" stroke-width="1"/><path d="M2.2,4.5H6.8" stroke="#1a4f9c" stroke-width="1.1"/></svg><svg class="abs" style="left:16px;top:11.0px" width="4" height="1" fill="#3a3a3a" shape-rendering="crispEdges"><rect x="0" y="0" width="1" height="1"/><rect x="2" y="0" width="1" height="1"/></svg><svg class="abs" style="left:23.5px;top:4px" width="11" height="14" viewBox="0 0 11 14"><path d="M.3,2.2V11.6C.3,14.6 10.7,14.6 10.7,11.6V2.2z" fill="#d38c5e"/><ellipse cx="5.5" cy="2.2" rx="5.2" ry="1.9" fill="#d38c5e"/><ellipse cx="5.5" cy="2.3" rx="3.9" ry="1.2" fill="#ecebea"/></svg><div class="tl" style="left:40px;top:5.5px">Data Sources</div>
<svg class="abs" style="left:22px;top:29.0px" width="9" height="9" viewBox="0 0 9 9"><rect x=".5" y=".5" width="8" height="8" fill="#fff" stroke="#333" stroke-width="1"/><path d="M2.2,4.5H6.8M4.5,2.2V6.8" stroke="#1a4f9c" stroke-width="1.1"/></svg><svg class="abs" style="left:32px;top:33.0px" width="4" height="1" fill="#3a3a3a" shape-rendering="crispEdges"><rect x="0" y="0" width="1" height="1"/><rect x="2" y="0" width="1" height="1"/></svg><svg class="abs" style="left:38px;top:27.0px" width="14" height="12" viewBox="0 0 14 12"><rect x="0" y="0" width="14" height="3" fill="#1b9ae2"/><path d="M.5,3V11.5H13.5V3M0,3.5H14M.5,6.3H13.5M.5,8.9H13.5M4.5,3V11.5M9.5,3V11.5" fill="none" stroke="#404040" stroke-width="1.15"/></svg><div class="tl" style="left:56px;top:27.5px">Details</div>
<svg class="abs" style="left:22px;top:51.0px" width="9" height="9" viewBox="0 0 9 9"><rect x=".5" y=".5" width="8" height="8" fill="#fff" stroke="#333" stroke-width="1"/><path d="M2.2,4.5H6.8" stroke="#1a4f9c" stroke-width="1.1"/></svg><svg class="abs" style="left:32px;top:55.0px" width="4" height="1" fill="#3a3a3a" shape-rendering="crispEdges"><rect x="0" y="0" width="1" height="1"/><rect x="2" y="0" width="1" height="1"/></svg><svg class="abs" style="left:38px;top:49.0px" width="14" height="12" viewBox="0 0 14 12"><rect x="0" y="0" width="14" height="3" fill="#1b9ae2"/><path d="M.5,3V11.5H13.5V3M0,3.5H14M.5,6.3H13.5M.5,8.9H13.5M4.5,3V11.5M9.5,3V11.5" fill="none" stroke="#404040" stroke-width="1.15"/></svg><div class="tl" style="left:56px;top:49.5px">Person</div>
<svg class="abs" style="left:44px;top:77.0px" width="8" height="1" fill="#3a3a3a" shape-rendering="crispEdges"><rect x="0" y="0" width="1" height="1"/><rect x="2" y="0" width="1" height="1"/><rect x="4" y="0" width="1" height="1"/><rect x="6" y="0" width="1" height="1"/></svg><svg class="abs" style="left:54px;top:71.0px" width="13" height="12" viewBox="0 0 13 12"><rect x=".5" y=".5" width="12" height="11" fill="#fff" stroke="#3a3a3a" stroke-width="1.1"/><text x="6.6" y="9.3" text-anchor="middle" font-family="Liberation Sans, sans-serif" font-weight="bold" font-size="8.6" fill="#0a0a0a" textLength="8.2" lengthAdjust="spacingAndGlyphs">12</text></svg><div class="tl" style="left:72px;top:71.5px">Id</div>
<svg class="abs" style="left:44px;top:99.0px" width="8" height="1" fill="#3a3a3a" shape-rendering="crispEdges"><rect x="0" y="0" width="1" height="1"/><rect x="2" y="0" width="1" height="1"/><rect x="4" y="0" width="1" height="1"/><rect x="6" y="0" width="1" height="1"/></svg><svg class="abs" style="left:54px;top:93.0px" width="13" height="12" viewBox="0 0 13 12"><rect x=".5" y=".5" width="12" height="11" fill="#fff" stroke="#3a3a3a" stroke-width="1.1"/><text x="6.6" y="9.9" text-anchor="middle" font-family="Liberation Serif, serif" font-weight="bold" font-size="10.4" fill="#1458ad" stroke="#1458ad" stroke-width=".2">A</text></svg><div class="tl" style="left:72px;top:93.5px">FirstName</div>
<svg class="abs" style="left:44px;top:121.0px" width="8" height="1" fill="#3a3a3a" shape-rendering="crispEdges"><rect x="0" y="0" width="1" height="1"/><rect x="2" y="0" width="1" height="1"/><rect x="4" y="0" width="1" height="1"/><rect x="6" y="0" width="1" height="1"/></svg><svg class="abs" style="left:54px;top:115.0px" width="13" height="12" viewBox="0 0 13 12"><rect x=".5" y=".5" width="12" height="11" fill="#fff" stroke="#3a3a3a" stroke-width="1.1"/><text x="6.6" y="9.9" text-anchor="middle" font-family="Liberation Serif, serif" font-weight="bold" font-size="10.4" fill="#1458ad" stroke="#1458ad" stroke-width=".2">A</text></svg><div class="tl" style="left:72px;top:115.5px">LastName</div>
<svg class="abs" style="left:44px;top:143.0px" width="8" height="1" fill="#3a3a3a" shape-rendering="crispEdges"><rect x="0" y="0" width="1" height="1"/><rect x="2" y="0" width="1" height="1"/><rect x="4" y="0" width="1" height="1"/><rect x="6" y="0" width="1" height="1"/></svg><svg class="abs" style="left:54px;top:137.0px" width="13" height="12" viewBox="0 0 13 12"><rect x=".5" y=".5" width="12" height="11" fill="#fff" stroke="#3a3a3a" stroke-width="1.1"/><text x="6.6" y="9.9" text-anchor="middle" font-family="Liberation Serif, serif" font-weight="bold" font-size="10.4" fill="#1458ad" stroke="#1458ad" stroke-width=".2">A</text></svg><div class="tl" style="left:72px;top:137.5px">FullName</div>
<svg class="abs" style="left:44px;top:165.0px" width="8" height="1" fill="#3a3a3a" shape-rendering="crispEdges"><rect x="0" y="0" width="1" height="1"/><rect x="2" y="0" width="1" height="1"/><rect x="4" y="0" width="1" height="1"/><rect x="6" y="0" width="1" height="1"/></svg><svg class="abs" style="left:54px;top:159.0px" width="13" height="12" viewBox="0 0 13 12"><rect x=".5" y=".5" width="12" height="11" fill="#fff" stroke="#3a3a3a" stroke-width="1.1"/><text x="6.6" y="9.9" text-anchor="middle" font-family="Liberation Serif, serif" font-weight="bold" font-size="10.4" fill="#1458ad" stroke="#1458ad" stroke-width=".2">A</text></svg><div class="tl" style="left:72px;top:159.5px">UserLogins</div>
<svg class="abs" style="left:44px;top:187.0px" width="8" height="1" fill="#3a3a3a" shape-rendering="crispEdges"><rect x="0" y="0" width="1" height="1"/><rect x="2" y="0" width="1" height="1"/><rect x="4" y="0" width="1" height="1"/><rect x="6" y="0" width="1" height="1"/></svg><svg class="abs" style="left:54px;top:181.0px" width="13" height="12" viewBox="0 0 13 12"><rect x=".5" y=".5" width="12" height="11" fill="#fff" stroke="#3a3a3a" stroke-width="1.1"/><text x="6.6" y="9.9" text-anchor="middle" font-family="Liberation Serif, serif" font-weight="bold" font-size="10.4" fill="#1458ad" stroke="#1458ad" stroke-width=".2">A</text></svg><div class="tl" style="left:72px;top:181.5px">EmailAddress</div>
<svg class="abs" style="left:44px;top:209.0px" width="8" height="1" fill="#3a3a3a" shape-rendering="crispEdges"><rect x="0" y="0" width="1" height="1"/><rect x="2" y="0" width="1" height="1"/><rect x="4" y="0" width="1" height="1"/><rect x="6" y="0" width="1" height="1"/></svg><svg class="abs" style="left:54px;top:203.0px" width="13" height="12" viewBox="0 0 13 12"><rect x=".5" y=".5" width="12" height="11" fill="#fff" stroke="#3a3a3a" stroke-width="1.1"/><text x="6.6" y="9.9" text-anchor="middle" font-family="Liberation Serif, serif" font-weight="bold" font-size="10.4" fill="#1458ad" stroke="#1458ad" stroke-width=".2">A</text></svg><div class="tl" style="left:72px;top:203.5px">OrganizationalStructure</div>
<svg class="abs" style="left:44px;top:231.0px" width="8" height="1" fill="#3a3a3a" shape-rendering="crispEdges"><rect x="0" y="0" width="1" height="1"/><rect x="2" y="0" width="1" height="1"/><rect x="4" y="0" width="1" height="1"/><rect x="6" y="0" width="1" height="1"/></svg><svg class="abs" style="left:54px;top:225.0px" width="13" height="12" viewBox="0 0 13 12"><rect x=".5" y=".5" width="12" height="11" fill="#fff" stroke="#3a3a3a" stroke-width="1.1"/><text x="6.6" y="9.9" text-anchor="middle" font-family="Liberation Serif, serif" font-weight="bold" font-size="10.4" fill="#1458ad" stroke="#1458ad" stroke-width=".2">A</text></svg><div class="tl" style="left:72px;top:225.5px">Department</div>
<svg class="abs" style="left:44px;top:253.0px" width="8" height="1" fill="#3a3a3a" shape-rendering="crispEdges"><rect x="0" y="0" width="1" height="1"/><rect x="2" y="0" width="1" height="1"/><rect x="4" y="0" width="1" height="1"/><rect x="6" y="0" width="1" height="1"/></svg><svg class="abs" style="left:54px;top:247.0px" width="13" height="12" viewBox="0 0 13 12"><rect x=".5" y=".5" width="12" height="11" fill="#fff" stroke="#3a3a3a" stroke-width="1.1"/><text x="6.6" y="9.9" text-anchor="middle" font-family="Liberation Serif, serif" font-weight="bold" font-size="10.4" fill="#1458ad" stroke="#1458ad" stroke-width=".2">A</text></svg><div class="tl" style="left:72px;top:247.5px">JobTitle</div>
<svg class="abs" style="left:38px;top:271.0px" width="9" height="9" viewBox="0 0 9 9"><rect x=".5" y=".5" width="8" height="8" fill="#fff" stroke="#333" stroke-width="1"/><path d="M2.2,4.5H6.8M4.5,2.2V6.8" stroke="#1a4f9c" stroke-width="1.1"/></svg><svg class="abs" style="left:48px;top:275.0px" width="4" height="1" fill="#3a3a3a" shape-rendering="crispEdges"><rect x="0" y="0" width="1" height="1"/><rect x="2" y="0" width="1" height="1"/></svg><svg class="abs" style="left:54px;top:269.0px" width="14" height="12" viewBox="0 0 14 12"><rect x="0" y="0" width="14" height="3" fill="#1b9ae2"/><path d="M.5,3V11.5H13.5V3M0,3.5H14M.5,6.3H13.5M.5,8.9H13.5M4.5,3V11.5M9.5,3V11.5" fill="none" stroke="#404040" stroke-width="1.15"/></svg><div class="tl" style="left:72px;top:269.5px">AttributeValues</div>
<svg class="abs" style="left:38px;top:293.0px" width="9" height="9" viewBox="0 0 9 9"><rect x=".5" y=".5" width="8" height="8" fill="#fff" stroke="#333" stroke-width="1"/><path d="M2.2,4.5H6.8M4.5,2.2V6.8" stroke="#1a4f9c" stroke-width="1.1"/></svg><svg class="abs" style="left:48px;top:297.0px" width="4" height="1" fill="#3a3a3a" shape-rendering="crispEdges"><rect x="0" y="0" width="1" height="1"/><rect x="2" y="0" width="1" height="1"/></svg><svg class="abs" style="left:54px;top:291.0px" width="14" height="12" viewBox="0 0 14 12"><rect x="0" y="0" width="14" height="3" fill="#1b9ae2"/><path d="M.5,3V11.5H13.5V3M0,3.5H14M.5,6.3H13.5M.5,8.9H13.5M4.5,3V11.5M9.5,3V11.5" fill="none" stroke="#404040" stroke-width="1.15"/></svg><div class="tl" style="left:72px;top:291.5px">Contacts</div>
<svg class="abs" style="left:38px;top:315.0px" width="9" height="9" viewBox="0 0 9 9"><rect x=".5" y=".5" width="8" height="8" fill="#fff" stroke="#333" stroke-width="1"/><path d="M2.2,4.5H6.8M4.5,2.2V6.8" stroke="#1a4f9c" stroke-width="1.1"/></svg><svg class="abs" style="left:48px;top:319.0px" width="4" height="1" fill="#3a3a3a" shape-rendering="crispEdges"><rect x="0" y="0" width="1" height="1"/><rect x="2" y="0" width="1" height="1"/></svg><svg class="abs" style="left:54px;top:313.0px" width="14" height="12" viewBox="0 0 14 12"><rect x="0" y="0" width="14" height="3" fill="#1b9ae2"/><path d="M.5,3V11.5H13.5V3M0,3.5H14M.5,6.3H13.5M.5,8.9H13.5M4.5,3V11.5M9.5,3V11.5" fill="none" stroke="#404040" stroke-width="1.15"/></svg><div class="tl" style="left:72px;top:313.5px">OrganizationsPerson</div>
<svg class="abs" style="left:38px;top:337.0px" width="9" height="9" viewBox="0 0 9 9"><rect x=".5" y=".5" width="8" height="8" fill="#fff" stroke="#333" stroke-width="1"/><path d="M2.2,4.5H6.8M4.5,2.2V6.8" stroke="#1a4f9c" stroke-width="1.1"/></svg><svg class="abs" style="left:48px;top:341.0px" width="4" height="1" fill="#3a3a3a" shape-rendering="crispEdges"><rect x="0" y="0" width="1" height="1"/><rect x="2" y="0" width="1" height="1"/></svg><svg class="abs" style="left:54px;top:335.0px" width="14" height="12" viewBox="0 0 14 12"><rect x="0" y="0" width="14" height="3" fill="#1b9ae2"/><path d="M.5,3V11.5H13.5V3M0,3.5H14M.5,6.3H13.5M.5,8.9H13.5M4.5,3V11.5M9.5,3V11.5" fill="none" stroke="#404040" stroke-width="1.15"/></svg><div class="tl" style="left:72px;top:335.5px">Positions</div>
 </div>
 <svg class="abs" style="left:518px;top:51px" width="11" height="337" viewBox="1281 420 11 337"><rect x="1281" y="420" width="11" height="337" fill="#fff"/><path d="M1283.6,429 1289.8,429 1286.7,426z" fill="#777"/><rect x="1283.8" y="435.5" width="6" height="224.5" rx="3" fill="#8a8a8a"/><path d="M1283.6,748 1289.8,748 1286.7,751z" fill="#777"/></svg>
 <svg class="abs" style="left:351px;top:388px" width="178" height="11" viewBox="1114 757 178 11"><rect x="1114" y="757" width="178" height="11" fill="#fcfcfc"/><path d="M1121.8,759.6V765.8L1118.8,762.7z" fill="#666"/><rect x="1129" y="759.8" width="115" height="6" rx="3" fill="#8a8a8a"/><path d="M1273,759.6V765.8L1276,762.7z" fill="#666"/></svg>
 <div class="abs arial" style="left:324px;top:422px;width:100px;height:22px;background:#2b5599;color:#fff;font-size:14px;line-height:22px;text-align:center">OK</div>
 <div class="abs arial" style="left:430px;top:422px;width:100px;height:22px;background:#2b5599;color:#fff;font-size:14px;line-height:22px;text-align:center">Cancel</div>
</div>
<!-- step annotations -->
<svg class="abs" style="left:1030px;top:400px" width="170" height="430" viewBox="1030 400 170 430">
 <defs><filter id="ash" x="-30%" y="-30%" width="160%" height="170%"><feGaussianBlur in="SourceAlpha" stdDeviation="2"/><feOffset dx="1" dy="2.5"/><feComponentTransfer><feFuncA type="linear" slope=".4"/></feComponentTransfer><feMerge><feMergeNode/><feMergeNode in="SourceGraphic"/></feMerge></filter>
 <radialGradient id="gcg" cx="50%" cy="50%" r="50%"><stop offset="0" stop-color="#9bc95e"/><stop offset=".8" stop-color="#a1cd66"/><stop offset=".86" stop-color="#8fd444"/><stop offset="1" stop-color="#8fd444"/></radialGradient></defs>
 <g filter="url(#ash)">
  <circle cx="1078.4" cy="432.6" r="14.7" fill="url(#gcg)" fill-opacity=".96"/>
  <circle cx="1097.5" cy="476.8" r="14.7" fill="url(#gcg)" fill-opacity=".96"/>
  <circle cx="1113.4" cy="563.7" r="14.7" fill="url(#gcg)" fill-opacity=".96"/>
  <circle cx="1060.3" cy="792.7" r="14.7" fill="url(#gcg)" fill-opacity=".96"/>
  <polygon points="1092.6,433.2 1103.4,428.6 1100.5,422.6 1127.1,433.1 1101,446 1103.7,441 1092.6,436.2" fill="#92d540"/>
  <polygon points="1111.6,475.2 1119.9,470.3 1116.7,464.1 1142.8,475.4 1116.7,487.3 1119.7,482.1 1111.6,478" fill="#92d540"/>
  <polygon points="1127.6,564.8 1147.9,559.1 1145.4,553.2 1171.8,563.4 1146.2,576.6 1148.4,571.2 1127.6,567.2" fill="#92d540"/>
  <polygon points="1070,790.6 1091.2,789.5 1090.2,783.3 1113.3,800.3 1085.3,805.9 1088.8,801.6 1074.4,796.4" fill="#92d540"/>
 </g>
 <text x="1078.4" y="438.1" text-anchor="middle" font-family="Liberation Sans, sans-serif" font-size="15.4" fill="#fff">1</text>
 <text x="1097.5" y="482.3" text-anchor="middle" font-family="Liberation Sans, sans-serif" font-size="15.4" fill="#fff">2</text>
 <text x="1113.4" y="569.2" text-anchor="middle" font-family="Liberation Sans, sans-serif" font-size="15.4" fill="#fff">3</text>
 <text x="1060.3" y="798.3000000000001" text-anchor="middle" font-family="Liberation Serif, serif" font-weight="bold" font-size="16.5" fill="#fff">4</text>
</svg>
</body>
</html>
